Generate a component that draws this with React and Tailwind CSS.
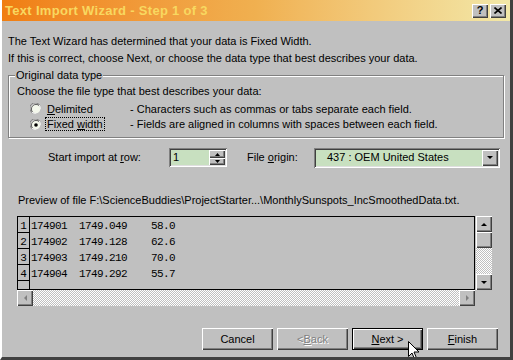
const raised = 'shadow-[inset_1px_1px_#ffffff,inset_-1px_-1px_#404040,inset_-2px_-2px_#808080]';
const sunken = 'shadow-[inset_1px_1px_#808080,inset_-1px_-1px_#ffffff,inset_2px_2px_#404040,inset_-2px_-2px_#dfdfdf]';
const dither = 'bg-[repeating-conic-gradient(#ffffff_0_25%,#c0c0c0_0_50%)] bg-[length:2px_2px]';

function Arrow({ dir, disabled }) {
  const pts = {
    up: '1,4 4,1 7,4',
    down: '1,1 4,4 7,1',
    left: '4,1 1,4 4,7',
    right: '1,1 4,4 1,7',
  }[dir];
  const vertical = dir === 'up' || dir === 'down';
  return (
    <svg width={vertical ? 8 : 5} height={vertical ? 5 : 8} viewBox={vertical ? '0 0 8 5' : '0 0 5 8'}>
      <polygon points={pts} fill={disabled ? '#808080' : '#000000'} />
    </svg>
  );
}

function ScrollButton({ dir, disabled }) {
  return (
    <div className={`w-[16px] h-[16px] bg-[#c0c0c0] flex items-center justify-center shrink-0 ${raised}`}>
      <Arrow dir={dir} disabled={disabled} />
    </div>
  );
}

function Radio({ checked }) {
  return (
    <svg width="12" height="12" viewBox="0 0 12 12" className="shrink-0">
      <path d="M10 2.5 A5.5 5.5 0 1 0 2.5 10" fill="none" stroke="#808080" />
      <path d="M9.5 3 A4.5 4.5 0 1 0 3 9.5" fill="none" stroke="#404040" />
      <path d="M2 9.5 A5.5 5.5 0 0 0 9.5 2" fill="none" stroke="#ffffff" />
      <circle cx="6" cy="6" r="4" fill="#f4f8ec" />
      {checked && <circle cx="6" cy="6" r="1.8" fill="#000000" />}
    </svg>
  );
}

function Button({ children, isDefault, disabled }) {
  return (
    <div className={`w-[71px] h-[22px] flex items-center justify-center text-[11px] ${isDefault ? 'border border-black' : ''} ${disabled ? 'text-[#808080] [text-shadow:1px_1px_#ffffff]' : 'text-black'}`}>
      <div className={`w-full h-full flex items-center justify-center ${raised}`}>{children}</div>
    </div>
  );
}

const rows = [
  ['174901', '1749.049', '58.0'],
  ['174902', '1749.128', '62.6'],
  ['174903', '1749.210', '70.0'],
  ['174904', '1749.292', '55.7'],
];

export default function App() {
  return (
    <div className="w-[513px] h-[360px] bg-[#c0c0c0] flex flex-col border-l-2 border-l-white border-r-[3px] border-r-[#404040] border-b-[3px] border-b-[#404040] overflow-hidden text-black" style={{ fontFamily: '"Liberation Sans", Arial, sans-serif' }}>
      {/* title bar */}
      <div className="h-[21px] shrink-0 flex items-center pl-[3px] pr-[4px] bg-gradient-to-r from-[#f07e10] via-[#f0b050] to-[#f2e8a8]">
        <span className="text-[13px] font-bold text-[#f8d860] tracking-[0.3px]">Text Import Wizard - Step 1 of 3</span>
        <div className="ml-auto flex gap-[2px]">
          <div className={`w-[16px] h-[14px] bg-[#c0c0c0] flex items-center justify-center text-[11px] font-bold leading-none ${raised}`}>?</div>
          <div className={`w-[16px] h-[14px] bg-[#c0c0c0] flex items-center justify-center ${raised}`}>
            <svg width="8" height="7" viewBox="0 0 8 7"><path d="M0.5 0.5 L7.5 6.5 M7.5 0.5 L0.5 6.5" stroke="#000" strokeWidth="1.6" /></svg>
          </div>
        </div>
      </div>

      <div className="flex flex-col pl-[6px] pr-[6px] text-[11px] leading-[17px]">
        <div className="mt-[12px]">The Text Wizard has determined that your data is Fixed Width.</div>
        <div>If this is correct, choose Next, or choose the data type that best describes your data.</div>

        {/* group box */}
        <div className="relative mt-[8px] h-[63px] border border-[#808080] shadow-[1px_1px_#ffffff,inset_1px_1px_#ffffff] pl-[8px] pt-[7px]">
          <span className="absolute -top-[9px] left-[6px] bg-[#c0c0c0] px-[1px]">Original data type</span>
          <div>Choose the file type that best describes your data:</div>
          <div className="flex items-center h-[16px] mt-[1px] pl-[13px]">
            <Radio />
            <span className="ml-[5px] w-[83px]"><span className="underline">D</span>elimited</span>
            <span>- Characters such as commas or tabs separate each field.</span>
          </div>
          <div className="flex items-center h-[15px] pl-[13px]">
            <Radio checked />
            <span className="ml-[4px] w-[84px]"><span className="outline-1 outline-dotted outline-black px-[1px]">Fixed <span className="underline">w</span>idth</span></span>
            <span>- Fields are aligned in columns with spaces between each field.</span>
          </div>
        </div>

        {/* import options */}
        <div className="flex items-center mt-[10px] h-[19px]">
          <span className="ml-[40px] w-[121px]">Start import at <span className="underline">r</span>ow:</span>
          <div className={`w-[58px] h-[19px] bg-[#c8e0c0] flex items-center pl-[4px] ${sunken}`}>
            <span className="flex-1">1</span>
            <div className="flex flex-col mr-[2px]">
              <div className={`w-[16px] h-[8px] bg-[#c0c0c0] flex items-center justify-center ${raised}`}>
                <svg width="5" height="3" viewBox="0 0 5 3"><polygon points="0,3 2.5,0 5,3" fill="#000" /></svg>
              </div>
              <div className={`w-[16px] h-[7px] bg-[#c0c0c0] flex items-center justify-center ${raised}`}>
                <svg width="5" height="3" viewBox="0 0 5 3"><polygon points="0,0 2.5,3 5,0" fill="#000" /></svg>
              </div>
            </div>
          </div>
          <span className="ml-[20px] w-[67px]">File <span className="underline">o</span>rigin:</span>
          <div className={`w-[186px] h-[20px] bg-[#c8e0c0] flex items-center ${sunken}`}>
            <span className="ml-[13px] flex-1">437 : OEM United States</span>
            <div className={`w-[16px] h-[16px] mr-[2px] bg-[#c0c0c0] flex items-center justify-center ${raised}`}>
              <Arrow dir="down" />
            </div>
          </div>
        </div>

        <div className="mt-[25px] ml-[10px]">Preview of file F:\ScienceBuddies\ProjectStarter...\MonthlySunspots_IncSmoothedData.txt.</div>

        {/* preview */}
        <div className="flex ml-[9px] mt-[7px]">
          <div className="flex flex-col">
            <div className="w-[458px] h-[74px] border border-black flex overflow-hidden" style={{ fontFamily: '"Liberation Mono", "DejaVu Sans Mono", monospace' }}>
              <div className="w-[12px] shrink-0 border-r border-black flex flex-col">
                {rows.map((r, i) => (
                  <div key={i} className="h-[16px] border-b border-black flex items-end justify-center text-[11px] leading-[12px]">{i + 1}</div>
                ))}
              </div>
              <div className="flex flex-col pl-[1px] pt-[1px]">
                {rows.map((r, i) => (
                  <div key={i} className="h-[16px] text-[11px] tracking-[-0.6px] leading-[16px] whitespace-pre">{`${r[0]}  ${r[1]}    ${r[2]}`}</div>
                ))}
              </div>
            </div>
            <div className="flex h-[16px] w-[458px]">
              <ScrollButton dir="left" disabled />
              <div className={`flex-1 ${dither}`}></div>
              <ScrollButton dir="right" disabled />
            </div>
          </div>
          <div className="flex flex-col ml-[1px] h-[74px]">
            <ScrollButton dir="up" />
            <div className={`w-[16px] h-[16px] bg-[#c0c0c0] ${raised}`}></div>
            <div className={`w-[16px] flex-1 ${dither}`}></div>
            <ScrollButton dir="down" />
          </div>
        </div>

        {/* buttons */}
        <div className="flex justify-end gap-[4px] mt-[22px] mr-[6px]">
          <Button>Cancel</Button>
          <Button disabled>&lt; <span className="underline">B</span>ack</Button>
          <div className="relative">
            <Button isDefault><span><span className="underline">N</span>ext &gt;</span></Button>
            <svg className="absolute left-[56px] top-[13px]" width="12" height="19" viewBox="0 0 12 19">
              <path d="M0.5 0.5 L0.5 15.5 L4 12 L6.5 18 L8.5 17 L6 11 L11 11 Z" fill="#fff" stroke="#000" />
            </svg>
          </div>
          <Button><span><span className="underline">F</span>inish</span></Button>
        </div>
      </div>
    </div>
  );
}
